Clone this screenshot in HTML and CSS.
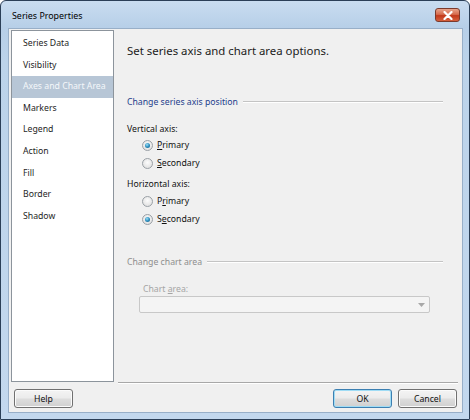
FILE: index.html
```html
<!DOCTYPE html>
<html>
<head>
<meta charset="utf-8">
<link rel="stylesheet" href="styles.css">
</head>
<body>
<div class="window">
  <div class="titlebar">
    <span class="title">Series Properties</span>
    <span class="close"><svg width="10" height="9" viewBox="0 0 10 9"><path d="M1.5 1 L8.5 8 M8.5 1 L1.5 8" stroke="#fff" stroke-width="2.2" stroke-linecap="round"/></svg></span>
  </div>
  <div class="client">
    <div class="main">
      <ul class="nav">
        <li>Series Data</li>
        <li>Visibility</li>
        <li class="sel">Axes and Chart Area</li>
        <li>Markers</li>
        <li>Legend</li>
        <li>Action</li>
        <li>Fill</li>
        <li>Border</li>
        <li>Shadow</li>
      </ul>
      <div class="page">
        <div class="heading">Set series axis and chart area options.</div>
        <div class="group-title"><span>Change series axis position</span><i class="rule"></i></div>
        <div class="label">Vertical axis:</div>
        <div class="radio on"><span class="dot"></span><span><u>P</u>rimary</span></div>
        <div class="radio"><span class="dot"></span><span><u>S</u>econdary</span></div>
        <div class="label second">Horizontal axis:</div>
        <div class="radio gap"><span class="dot"></span><span>P<u>r</u>imary</span></div>
        <div class="radio on"><span class="dot"></span><span>S<u>e</u>condary</span></div>
        <div class="group-title disabled"><span>Change chart area</span><i class="rule"></i></div>
        <div class="sublabel">Chart <u>a</u>rea:</div>
        <div class="combo"><svg width="7" height="4" viewBox="0 0 7 4"><path d="M0 0 H7 L3.5 4 Z" fill="#a8a8a8"/></svg></div>
      </div>
    </div>
    <div class="footer">
      <button class="btn">Help</button>
      <span class="spacer"></span>
      <button class="btn default">OK</button>
      <button class="btn">Cancel</button>
    </div>
  </div>
</div>
</body>
</html>
```

FILE: styles.css
```css
* { box-sizing: border-box; }
html, body { margin: 0; padding: 0; background: #fff; }
body { font-family: "Noto Sans", "Open Sans", sans-serif; font-size: 8.7px; color: #000; }

.window {
  width: 470px; height: 420px;
  border: 1px solid #2b3f57;
  border-radius: 6px 6px 0 0;
  background: linear-gradient(to bottom, #c9dcf0 0px, #b7cfe8 26px, #bcd3ea 60px, #c3d8ee 100%);
  display: flex; flex-direction: column;
}
.titlebar {
  height: 27px; flex: none;
  display: flex; align-items: center; justify-content: space-between;
  padding: 2px 9px 0 11px;
}
.title { font-size: 8.9px; color: #000; }
.close {
  width: 25px; height: 14px; margin-top: -1px;
  border: 1px solid #7b3a2c; border-radius: 3px;
  background: linear-gradient(to bottom, #e9a48c 0%, #d66b4d 45%, #c2391b 55%, #d5603e 100%);
  display: flex; align-items: center; justify-content: center;
}
.close svg { display: block; }

.client {
  margin: 0 6px 6px 7px;
  flex: 1;
  background: #f0f0f0;
  border: 1px solid #98afc8;
  display: flex; flex-direction: column;
}
.main { display: flex; padding: 1px 0 0 2px; height: 355px; }
.nav {
  list-style: none; margin: 0; padding: 2px 0 0 0;
  width: 103px; height: 352px;
  background: #fff; border: 1px solid #8c949c;
}
.nav li {
  height: 21.6px; line-height: 21.6px;
  padding-left: 11px; white-space: nowrap;
  font-size: 8.7px; color: #1e1e1e;
}
.nav li.sel { background: #b7c6d6; color: #f4f7fa; }

.page {
  margin-left: 4px; width: 340px; height: 353px;
  border-bottom: 1px solid #a8a8a8;
  box-shadow: 0 1px 0 #fff;
  padding: 11px 0 0 9px;
}
.heading { font-size: 11.4px; color: #1b1b1b; height: 20px; line-height: 20px; }
.group-title {
  display: flex; align-items: center; gap: 5px;
  margin-top: 33px; height: 16px; margin-right: 15px;
  color: #1d3e8c; font-size: 8.7px;
}
.group-title .rule { flex: 1; height: 1px; background: #c4c4c4; border-bottom: 1px solid #fff; box-sizing: content-box; }
.group-title.disabled { color: #8e8e8e; margin-top: 26px; }
.label { margin-top: 12px; height: 14px; line-height: 14px; font-size: 8.7px; color: #111; }
.label.second { margin-top: 5px; }
.radio {
  display: flex; align-items: center; gap: 4px;
  margin-left: 15px; height: 18px; font-size: 8.7px; color: #111;
}
.radio.gap { margin-top: 1px; }
.radio .dot {
  width: 11px; height: 11px; border-radius: 50%;
  border: 1px solid #9aa0a6;
  background: radial-gradient(circle at 50% 40%, #fcfcfc 0%, #e4e4e4 70%, #d4d4d4 100%);
  display: flex; align-items: center; justify-content: center;
}
.radio.on .dot::after {
  content: ""; width: 5px; height: 5px; border-radius: 50%;
  background: radial-gradient(circle at 40% 35%, #9fe0f7 0%, #2c8fbf 50%, #10557e 100%);
}
.sublabel { margin: 12px 0 0 16px; height: 14px; line-height: 14px; color: #a5a5a5; font-size: 8.7px; }
.combo {
  margin: 0 0 0 12px; width: 291px; height: 17px;
  border: 1px solid #c8c8c8; border-radius: 2px;
  background: #f4f4f4;
  display: flex; align-items: center; justify-content: flex-end; padding-right: 4px;
}
.combo svg { display: block; }

.footer {
  display: flex; align-items: flex-start; gap: 6px;
  padding: 5px 5px 0 5px;
}
.spacer { flex: 1; }
.btn {
  width: 59px; height: 19px; padding: 0; margin: 0;
  font-family: "Noto Sans", "Open Sans", sans-serif; font-size: 8.7px; color: #111;
  border: 1px solid #707070; border-radius: 3px;
  background: linear-gradient(to bottom, #f4f4f4 0%, #ebebeb 48%, #dddddd 52%, #d0d0d0 100%);
  box-shadow: inset 0 0 0 1px #fbfbfb;
}
.btn.default { border-color: #3c7fb1; box-shadow: inset 0 0 0 1px #9fdcf5; }
```
